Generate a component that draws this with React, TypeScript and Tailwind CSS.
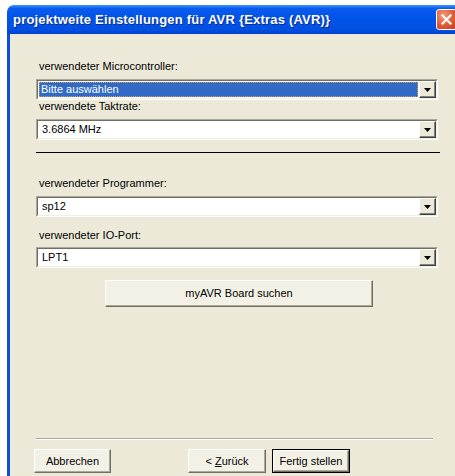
import { ReactNode } from "react";

const ui = "font-['Liberation_Sans',Arial,sans-serif]";

function Arrow() {
   return (
      <div className="w-[17px] h-full flex items-center justify-center bg-[#ECE9D8] border-t border-l border-t-white border-l-white border-b border-r border-b-[#404040] border-r-[#404040] shadow-[inset_-1px_-1px_0_#808080]">
         <svg width="7" height="4" viewBox="0 0 7 4">
            <path d="M0 0h7L3.5 4z" fill="#000" />
         </svg>
      </div>
   );
}

function Combo( { value, selected = false } : { value: string, selected?: boolean } ) {
   return (
      <div className="h-[21px] w-[402px] border-t border-l border-t-[#ACA899] border-l-[#ACA899] border-b border-r border-b-white border-r-white">
         <div className="h-full flex bg-white border-t border-l border-t-[#716F64] border-l-[#716F64] border-b border-r border-b-[#F1EFE2] border-r-[#F1EFE2]">
            <div className="flex-1 flex items-center p-[1px]">
               {selected ? (
                  <div className="h-full w-full flex items-center px-[2px] bg-[#316AC5] text-white outline-1 outline-dotted outline-[#C9A26B] -outline-offset-1">
                     {value}
                  </div>
               ) : (
                  <span className="px-[3px] text-black">{value}</span>
               )}
            </div>
            <Arrow />
         </div>
      </div>
   );
}

function Label( { children, className = "" } : { children: ReactNode, className?: string } ) {
   return <div className={"h-[13px] leading-[13px] pl-[3px] text-black " + className}>{children}</div>;
}

function Button( { children, width, main = false, className = "" } : { children: ReactNode, width: string, main?: boolean, className?: string } ) {
   return (
      <div className={`${width} ${main ? "border border-black" : ""} ${className}`}>
         <div className="h-full flex items-center justify-center bg-[#F3F1E6] border-t border-l border-t-white border-l-white border-b border-r border-b-[#716F64] border-r-[#716F64] shadow-[inset_-1px_-1px_0_#ACA899]">
            <span>{children}</span>
         </div>
      </div>
   );
}

export default function App() {
   return (
      <div className={`w-[455px] h-[476px] bg-white overflow-hidden text-[11px] ${ui}`}>
         <div className="ml-[7px] mt-[5px] w-[470px] h-[471px] flex flex-col rounded-tl-[7px] overflow-hidden">
            {/* title bar */}
            <div className="h-[29px] shrink-0 flex items-center pl-[6px] bg-[linear-gradient(to_bottom,#3D95FF_0%,#0A5BEE_12%,#0053E8_50%,#0250E2_85%,#0041C8_100%)]">
               <span className="text-white font-bold text-[13px] tracking-[0.2px] [text-shadow:1px_1px_0_#0A2A8A]">
                  projektweite Einstellungen für AVR {"{"}Extras (AVR){"}"}
               </span>
               <div className="ml-auto mr-[20px] w-[21px] h-[21px] rounded-[3px] border border-white flex items-center justify-center bg-[radial-gradient(circle_at_35%_30%,#F19A7E,#E05A33_55%,#C3391A)]">
                  <svg width="11" height="11" viewBox="0 0 11 11">
                     <path d="M1.5 1.5l8 8M9.5 1.5l-8 8" stroke="#fff" strokeWidth="2.2" strokeLinecap="square" />
                  </svg>
               </div>
            </div>

            {/* dialog body */}
            <div className="flex-1 bg-[#ECE9D8] border-l-[3px] border-l-[#0B4EE0] pl-[26px] pt-[26px] flex flex-col">
               <Label>verwendeter Microcontroller:</Label>
               <div className="mt-[6px]"><Combo value="Bitte auswählen" selected /></div>
               <Label>verwendete Taktrate:</Label>
               <div className="mt-[6px]"><Combo value="3.6864 MHz" /></div>
               <div className="mt-[12px] w-[404px] h-px bg-black" />

               <Label className="mt-[24px]">verwendeter Programmer:</Label>
               <div className="mt-[6px]"><Combo value="sp12" /></div>
               <Label className="mt-[12px]">verwendeter IO-Port:</Label>
               <div className="mt-[5px]"><Combo value="LPT1" /></div>
               <div className="mt-[12px] ml-[69px]">
                  <Button width="w-[268px] h-[27px]">myAVR Board suchen</Button>
               </div>

               <div className="mt-auto w-[397px] border-t border-t-[#ACA899] border-b border-b-white" />
               <div className="mt-[9px] mb-[3px] flex h-[24px] -ml-[2px]">
                  <Button width="w-[77px] h-[24px]">Abbrechen</Button>
                  <Button width="w-[78px] h-[24px]" className="ml-[77px]">&lt; <span className="underline">Z</span>urück</Button>
                  <Button width="w-[78px] h-[24px]" main className="ml-[6px]">Fertig stellen</Button>
               </div>
            </div>
         </div>
      </div>
   );
}
